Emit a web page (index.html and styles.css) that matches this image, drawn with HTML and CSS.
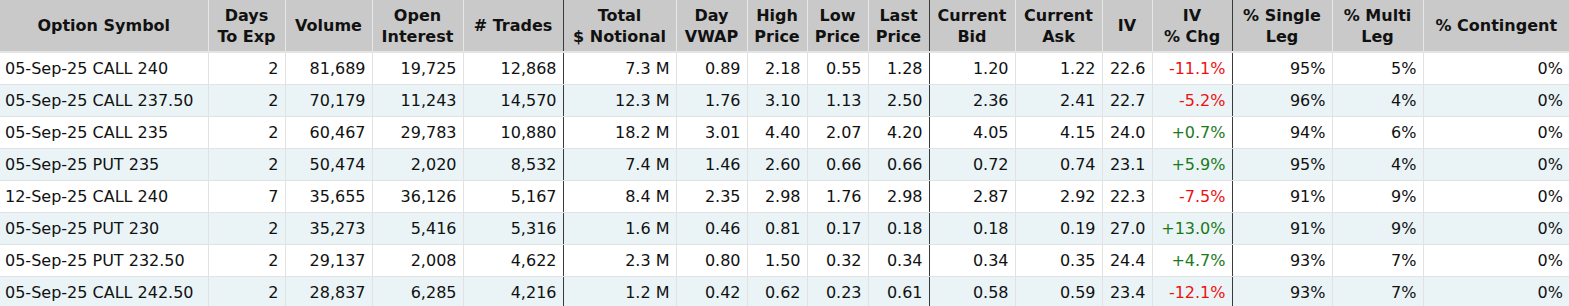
FILE: index.html
```html
<!DOCTYPE html>
<html lang="en">
<head>
    <meta charset="UTF-8">
    <title>Most Active Options</title>
    <link rel="stylesheet" href="styles.css">
</head>
<body>
    <table class="options">
        <colgroup>
            <col style="width: 208px"><col style="width: 77px"><col style="width: 87px"><col style="width: 91px">
            <col style="width: 100px"><col style="width: 113px"><col style="width: 71px"><col style="width: 60px">
            <col style="width: 61px"><col style="width: 61px"><col style="width: 86px"><col style="width: 87px">
            <col style="width: 50px"><col style="width: 80px"><col style="width: 100px"><col style="width: 91px">
            <col style="width: 146px">
        </colgroup>
        <thead>
            <tr>
                <th>Option Symbol</th>
                <th>Days<br>To Exp</th>
                <th>Volume</th>
                <th>Open<br>Interest</th>
                <th class="sep"># Trades</th>
                <th>Total<br>$ Notional</th>
                <th>Day<br>VWAP</th>
                <th>High<br>Price</th>
                <th>Low<br>Price</th>
                <th class="sep">Last<br>Price</th>
                <th>Current<br>Bid</th>
                <th>Current<br>Ask</th>
                <th>IV</th>
                <th class="sep">IV<br>% Chg</th>
                <th>% Single<br>Leg</th>
                <th>% Multi<br>Leg</th>
                <th>% Contingent</th>
            </tr>
        </thead>
        <tbody id="rows"></tbody>
    </table>

    <script>
        const rows = [
            ['05-Sep-25 CALL 240', 2, '81,689', '19,725', '12,868', '7.3 M', '0.89', '2.18', '0.55', '1.28', '1.20', '1.22', '22.6', '-11.1%', '95%', '5%', '0%'],
            ['05-Sep-25 CALL 237.50', 2, '70,179', '11,243', '14,570', '12.3 M', '1.76', '3.10', '1.13', '2.50', '2.36', '2.41', '22.7', '-5.2%', '96%', '4%', '0%'],
            ['05-Sep-25 CALL 235', 2, '60,467', '29,783', '10,880', '18.2 M', '3.01', '4.40', '2.07', '4.20', '4.05', '4.15', '24.0', '+0.7%', '94%', '6%', '0%'],
            ['05-Sep-25 PUT 235', 2, '50,474', '2,020', '8,532', '7.4 M', '1.46', '2.60', '0.66', '0.66', '0.72', '0.74', '23.1', '+5.9%', '95%', '4%', '0%'],
            ['12-Sep-25 CALL 240', 7, '35,655', '36,126', '5,167', '8.4 M', '2.35', '2.98', '1.76', '2.98', '2.87', '2.92', '22.3', '-7.5%', '91%', '9%', '0%'],
            ['05-Sep-25 PUT 230', 2, '35,273', '5,416', '5,316', '1.6 M', '0.46', '0.81', '0.17', '0.18', '0.18', '0.19', '27.0', '+13.0%', '91%', '9%', '0%'],
            ['05-Sep-25 PUT 232.50', 2, '29,137', '2,008', '4,622', '2.3 M', '0.80', '1.50', '0.32', '0.34', '0.34', '0.35', '24.4', '+4.7%', '93%', '7%', '0%'],
            ['05-Sep-25 CALL 242.50', 2, '28,837', '6,285', '4,216', '1.2 M', '0.42', '0.62', '0.23', '0.61', '0.58', '0.59', '23.4', '-12.1%', '93%', '7%', '0%']
        ];

        // columns followed by the dark divider
        const dividers = [4, 9, 13];
        const body = document.getElementById('rows');

        rows.forEach(row => {
            const tr = document.createElement('tr');
            row.forEach((value, i) => {
                const td = document.createElement('td');
                td.textContent = value;
                if (i === 0) td.className = 'symbol';
                if (dividers.includes(i)) td.classList.add('sep');
                if (i === 13) td.classList.add(String(value).startsWith('-') ? 'down' : 'up');
                tr.appendChild(td);
            });
            body.appendChild(tr);
        });
    </script>
</body>
</html>
```

FILE: styles.css
```css
* {
    margin: 0;
    padding: 0;
    box-sizing: border-box;
}

body {
    font-family: Tahoma, "DejaVu Sans", sans-serif;
    font-size: 16px;
    color: #111;
    background: white;
}

.options {
    width: 1569px;
    table-layout: fixed;
    border-collapse: collapse;
}

.options th {
    height: 52px;
    background: #c9c9c9;
    font-weight: bold;
    line-height: 21px;
    text-align: center;
    border-right: 1px solid #e6e6e6;
    border-bottom: 2px solid #e4e4e4;
    white-space: nowrap;
}

.options td {
    height: 32px;
    padding: 0 6px 0 4px;
    text-align: right;
    white-space: nowrap;
    border-right: 1px solid #e2e2e2;
    border-bottom: 1px solid #e2e2e2;
}

.options tbody tr:nth-child(even) td {
    background: #eaf4f6;
}

.options td.symbol {
    text-align: left;
    padding-left: 5px;
}

.options th:last-child,
.options td:last-child {
    border-right: none;
}

.options .sep {
    border-right: 1px solid #3a3a3a;
}

.down {
    color: #ee1111;
}

.up {
    color: #1a7a1a;
}
```
